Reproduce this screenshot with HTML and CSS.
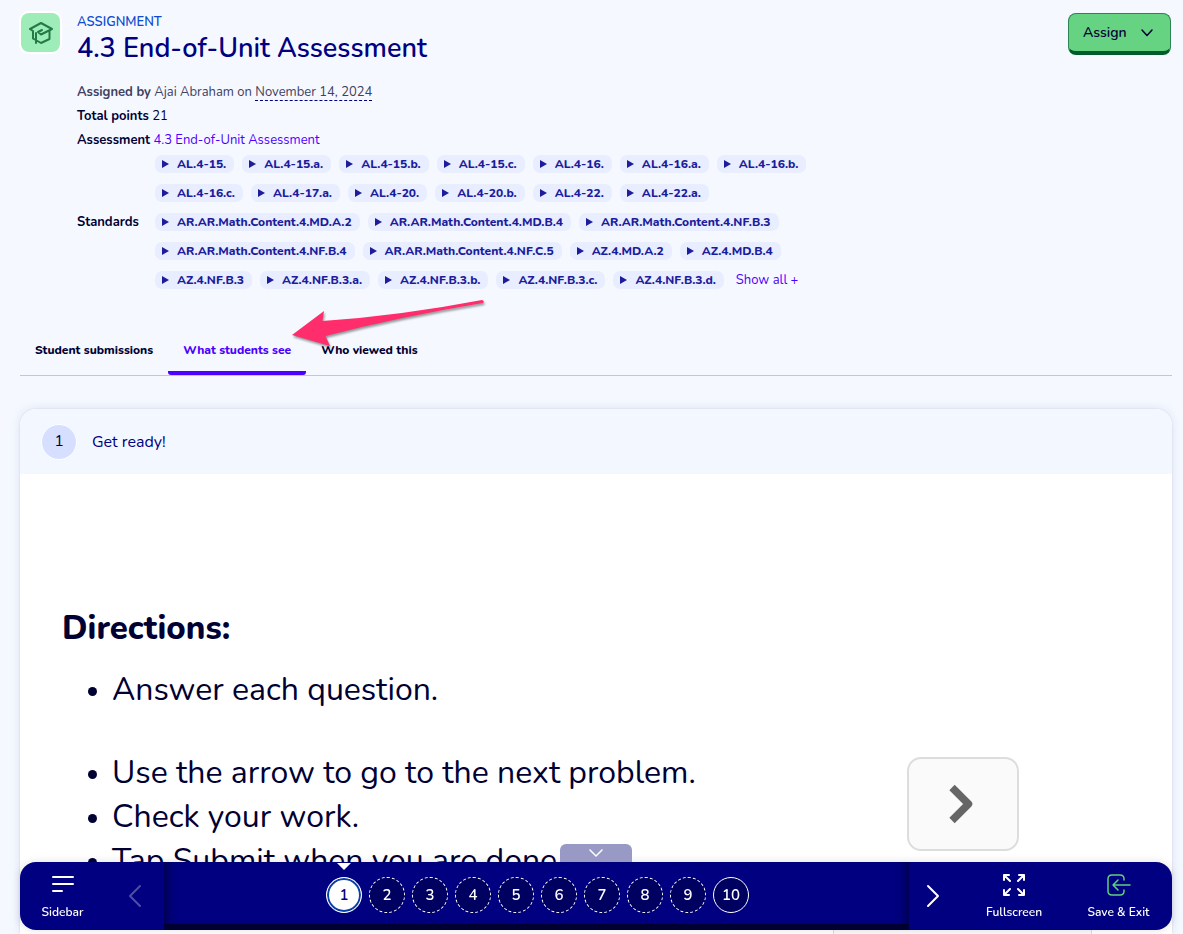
FILE: index.html
```html
<!DOCTYPE html>
<html lang="en">
<head>
  <meta charset="UTF-8" />
  <meta name="viewport" content="width=device-width, initial-scale=1.0"/>
  <title>4.3 End-of-Unit Assessment</title>
  <link rel="stylesheet" href="styles.css">
</head>
<body>
  <header class="page-header">
    <div class="badge">
      <svg width="26" height="26" viewBox="0 0 26 26" fill="none" stroke="#237a47" stroke-width="2" stroke-linejoin="round" stroke-linecap="round">
        <path d="M2 9 13 3l11 6-11 5.500-3-2.500 4-2M2 9l3 2v7.500M8 13v10M5 18.500l8 4.500 8.500-4v-8"/>
      </svg>
    </div>
    <div class="heading">
      <div class="kind">ASSIGNMENT</div>
      <h1>4.3 End-of-Unit Assessment</h1>
      <p class="meta muted"><b>Assigned by</b> Ajai Abraham on <span class="date">November 14, 2024</span></p>
      <p class="meta"><b>Total points</b> 21</p>
      <p class="meta"><b>Assessment</b> <a href="#">4.3 End-of-Unit Assessment</a></p>
      <div class="standards">
        <b>Standards</b>
        <div class="chip-rows">
          <div class="chips">
            <button class="chip">AL.4-15.</button>
            <button class="chip">AL.4-15.a.</button>
            <button class="chip">AL.4-15.b.</button>
            <button class="chip">AL.4-15.c.</button>
            <button class="chip">AL.4-16.</button>
            <button class="chip">AL.4-16.a.</button>
            <button class="chip">AL.4-16.b.</button>
          </div>
          <div class="chips">
            <button class="chip">AL.4-16.c.</button>
            <button class="chip">AL.4-17.a.</button>
            <button class="chip">AL.4-20.</button>
            <button class="chip">AL.4-20.b.</button>
            <button class="chip">AL.4-22.</button>
            <button class="chip">AL.4-22.a.</button>
          </div>
          <div class="chips">
            <button class="chip">AR.AR.Math.Content.4.MD.A.2</button>
            <button class="chip">AR.AR.Math.Content.4.MD.B.4</button>
            <button class="chip">AR.AR.Math.Content.4.NF.B.3</button>
          </div>
          <div class="chips">
            <button class="chip">AR.AR.Math.Content.4.NF.B.4</button>
            <button class="chip">AR.AR.Math.Content.4.NF.C.5</button>
            <button class="chip">AZ.4.MD.A.2</button>
            <button class="chip">AZ.4.MD.B.4</button>
          </div>
          <div class="chips">
            <button class="chip">AZ.4.NF.B.3</button>
            <button class="chip">AZ.4.NF.B.3.a.</button>
            <button class="chip">AZ.4.NF.B.3.b.</button>
            <button class="chip">AZ.4.NF.B.3.c.</button>
            <button class="chip">AZ.4.NF.B.3.d.</button>
            <a class="show-all" href="#">Show all +</a>
          </div>
        </div>
      </div>
    </div>
    <button class="assign">Assign
      <svg width="14" height="10" viewBox="0 0 14 10" fill="none" stroke="#000033" stroke-width="1.500" stroke-linecap="round" stroke-linejoin="round"><path d="M2 2l5 5.500L12 2"/></svg>
    </button>
  </header>

  <nav class="tabs">
    <a href="#">Student submissions</a>
    <a href="#" class="active">What students see</a>
    <a href="#">Who viewed this</a>
    <svg class="pointer" width="204" height="60" viewBox="0 0 204 60">
      <path fill="#ff2d6b" d="M4 40 36 16l-1.500 10Q110 21 194 5q3 1 1 3Q110 22 37.500 41L42 51z"/>
    </svg>
  </nav>

  <main class="card">
    <div class="card-head">
      <span class="step">1</span>
      <span>Get ready!</span>
    </div>
    <div class="slide">
      <div class="directions">
        <h2>Directions:</h2>
        <ul>
          <li>Answer each question.</li>
          <li class="spaced">Use the arrow to go to the next problem.</li>
          <li>Check your work.</li>
          <li>Tap Submit when you are done</li>
        </ul>
      </div>
      <div class="arrow-box">
        <svg width="30" height="42" viewBox="0 0 30 42" fill="none" stroke="#666" stroke-width="7.500" stroke-linejoin="round"><path d="M4 4.500 20.500 21 4 37.500"/></svg>
      </div>
    </div>
    <div class="answer-panel"></div>
  </main>

  <footer class="player">
    <button class="collapse" aria-label="Hide bar">
      <svg width="16" height="10" viewBox="0 0 16 10" fill="none" stroke="#fff" stroke-width="1.500" stroke-linecap="round"><path d="M2 2l6 6 6-6"/></svg>
    </button>
    <button class="tool sidebar">
      <svg width="24" height="22" viewBox="0 0 24 22" stroke="#fff" stroke-width="2" stroke-linecap="round"><path d="M2 3h20M2 10h20M2 17h9"/></svg>
      Sidebar
    </button>
    <button class="step-arrow prev" aria-label="Previous">
      <svg width="16" height="24" viewBox="0 0 16 24" fill="none" stroke="#4d4da6" stroke-width="2" stroke-linecap="round" stroke-linejoin="round"><path d="M13 2 3 12l10 10"/></svg>
    </button>
    <div class="track">
      <button class="q current">1</button>
      <button class="q">2</button>
      <button class="q">3</button>
      <button class="q">4</button>
      <button class="q">5</button>
      <button class="q">6</button>
      <button class="q">7</button>
      <button class="q">8</button>
      <button class="q">9</button>
      <button class="q last">10</button>
    </div>
    <button class="step-arrow next" aria-label="Next">
      <svg width="16" height="24" viewBox="0 0 16 24" fill="none" stroke="#fff" stroke-width="2" stroke-linecap="round" stroke-linejoin="round"><path d="M3 2l10 10L3 22"/></svg>
    </button>
    <button class="tool fullscreen">
      <svg width="24" height="22" viewBox="0 0 24 22" fill="none" stroke="#fff" stroke-width="2" stroke-linecap="round" stroke-linejoin="round">
        <path d="M2 6V1h5M2 1l6 6M17 1h5v5M22 1l-6 6M2 16v5h5M2 21l6-6M22 16v5h-5M22 21l-6-6"/>
      </svg>
      Fullscreen
    </button>
    <button class="tool exit">
      <svg width="24" height="22" viewBox="0 0 24 22" fill="none" stroke="#5fd07f" stroke-width="1.500" stroke-linecap="round" stroke-linejoin="round">
        <path d="M17 6V5q0-4-4-4H5Q1 1 1 5v12q0 4 4 4h8q4 0 4-4v-1M23 11H6M11 6l-5 5 5 5"/>
      </svg>
      Save &amp; Exit
    </button>
  </footer>
</body>
</html>
```
FILE: styles.css
```css
* {
  box-sizing: border-box;
}

body {
  margin: 0;
  padding: 0 11px 0 20px;
  height: 100vh;
  overflow: hidden;
  display: flex;
  flex-direction: column;
  font-family: Nunito, Lato, "Open Sans", sans-serif;
  font-size: 13px;
  line-height: 18px;
  color: #000033;
  background: #f5f9ff;
}

button {
  font: inherit;
  border: 0;
  padding: 0;
  cursor: pointer;
}

a {
  color: #4c00ff;
  text-decoration: none;
}

.page-header {
  display: flex;
  align-items: flex-start;
  padding-top: 13px;
}

.badge {
  width: 39px;
  height: 39px;
  margin: 0 17px 0 1px;
  border-radius: 8px;
  box-shadow: 0 0 0 2px #fff;
  background: #9eedb8;
  display: flex;
  align-items: center;
  justify-content: center;
}

.heading {
  flex: 1;
}

.kind {
  font-weight: 600;
  color: #0f4bd0;
}

h1 {
  margin: 0 0 16px;
  font-size: 27px;
  line-height: 36px;
  font-weight: 600;
  color: #000080;
}

.meta {
  margin: 0 0 6px;
}

.muted {
  color: #40405f;
}

.date {
  display: inline-block;
  line-height: 16px;
  border-bottom: 1px dashed #000080;
}

.standards {
  display: flex;
  align-items: center;
}

.standards b {
  width: 78px;
}

.chip-rows {
  display: flex;
  flex-direction: column;
  gap: 11px;
}

.chips {
  display: flex;
  gap: 8px;
}

.chip {
  display: flex;
  align-items: center;
  gap: 8px;
  height: 18px;
  padding: 0 8px 0 7px;
  border-radius: 7px;
  font-size: 12px;
  font-weight: 800;
  color: #1c1c9c;
  background: #e8eeff;
}

.chip::before {
  content: "";
  border-left: 7px solid #1c1c9c;
  border-top: 4px solid transparent;
  border-bottom: 4px solid transparent;
}

.show-all {
  margin-left: 4px;
}

.assign {
  width: 103px;
  height: 42px;
  margin-right: 1px;
  display: flex;
  align-items: center;
  justify-content: space-between;
  padding: 0 16px 0 14px;
  font-size: 14px;
  font-weight: 600;
  color: #000033;
  background: #66d383;
  border: 1px solid #2c8550;
  border-bottom: 4px solid #005c2a;
  border-radius: 8px;
}

.tabs {
  position: relative;
  display: flex;
  margin-top: 36px;
  border-bottom: 1px solid #b8c5f8;
}

.tabs a {
  padding: 16px 15px 12px;
  border-bottom: 4px solid transparent;
  border-radius: 3px;
  font-size: 12px;
  font-weight: 800;
  color: #000033;
}

.tabs a.active {
  color: #4c00ff;
  border-color: #4c00ff;
}

/* pink callout arrow */
.pointer {
  position: absolute;
  left: 268px;
  top: -30px;
  filter: drop-shadow(1px 2px 1px rgba(0, 0, 0, 0.4));
}

.card {
  position: relative;
  flex: 1;
  min-height: 0;
  margin-top: 33px;
  background: #fff;
  border-radius: 16px 16px 0 0;
  box-shadow: 0 0 12px rgba(40, 60, 160, 0.12), 0 0 2px rgba(0, 0, 0, 0.12);
}

.card-head {
  display: flex;
  align-items: center;
  gap: 15px;
  height: 65px;
  padding-left: 21px;
  font-size: 16px;
  color: #000080;
  background: #f3f7ff;
  border-radius: 16px 16px 0 0;
}

.step {
  width: 36px;
  height: 36px;
  border: 1px solid #fff;
  border-radius: 50%;
  line-height: 32px;
  text-align: center;
  color: #000033;
  background: #d6dfff;
}

.slide {
  display: flex;
  justify-content: space-between;
  padding: 133px 153px 0 42px;
  font-size: 32px;
  line-height: 44px;
}

.slide h2 {
  margin: 0 0 17px;
  font-size: 33px;
  line-height: 44px;
  font-weight: 800;
}

.slide ul {
  margin: 0;
  padding-left: 50px;
}

.slide li::marker {
  font-size: 26px;
}

.spaced {
  margin-top: 39px;
}

.arrow-box {
  width: 112px;
  height: 94px;
  margin-top: 150px;
  display: flex;
  align-items: center;
  justify-content: center;
  border: 2px solid #ddd;
  border-radius: 14px;
  background: #fafafa;
}

.answer-panel {
  position: absolute;
  right: 80px;
  bottom: 0;
  width: 259px;
  height: 12px;
  border: solid #ddd;
  border-width: 0 1px;
  background: #fafafa;
}

.player {
  position: fixed;
  left: 20px;
  right: 11px;
  bottom: 4px;
  height: 68px;
  display: flex;
  color: #fff;
  background: #000080;
  border-radius: 16px;
  box-shadow: 0 0 8px rgba(0, 0, 0, 0.12);
}

.player button {
  color: #fff;
  background: none;
}

.player .tool {
  display: flex;
  flex-direction: column;
  align-items: center;
  gap: 7px;
  padding-top: 12px;
  font-size: 12px;
  font-weight: 600;
}

.player .collapse {
  position: absolute;
  left: 540px;
  top: -18px;
  width: 72px;
  height: 18px;
  border-radius: 6px 6px 0 0;
  background: #9999c5;
  line-height: 10px;
}

.sidebar {
  width: 85px;
}

.step-arrow {
  width: 59px;
}

.next {
  width: 48px;
}

.fullscreen {
  width: 114px;
}

.exit {
  width: 101px;
  padding-right: 6px;
}

.step-arrow svg {
  display: block;
  margin: 0 auto;
}

.track {
  flex: 1;
  display: flex;
  justify-content: center;
  align-items: center;
  gap: 7px;
  padding: 0 0 1px 2px;
  border-bottom: 6px solid #000033;
  box-shadow: inset 10px 0 8px -6px #000050, inset -10px 0 8px -6px #000050;
}

.player .q {
  width: 36px;
  height: 36px;
  margin-top: 4px;
  border: 1px dashed #fff;
  border-radius: 50%;
  font-size: 15px;
  font-weight: 600;
  background: #000061;
}

.player .last {
  border-style: solid;
}

.player .current {
  position: relative;
  color: #000080;
  background: #fff;
  border-style: solid;
  box-shadow: inset 0 0 0 2px #0b3fa8;
}

.current::after {
  content: "";
  position: absolute;
  left: 10px;
  top: -15px;
  border: 7px solid transparent;
  border-top-color: #fff;
  border-bottom: 0;
}
```
